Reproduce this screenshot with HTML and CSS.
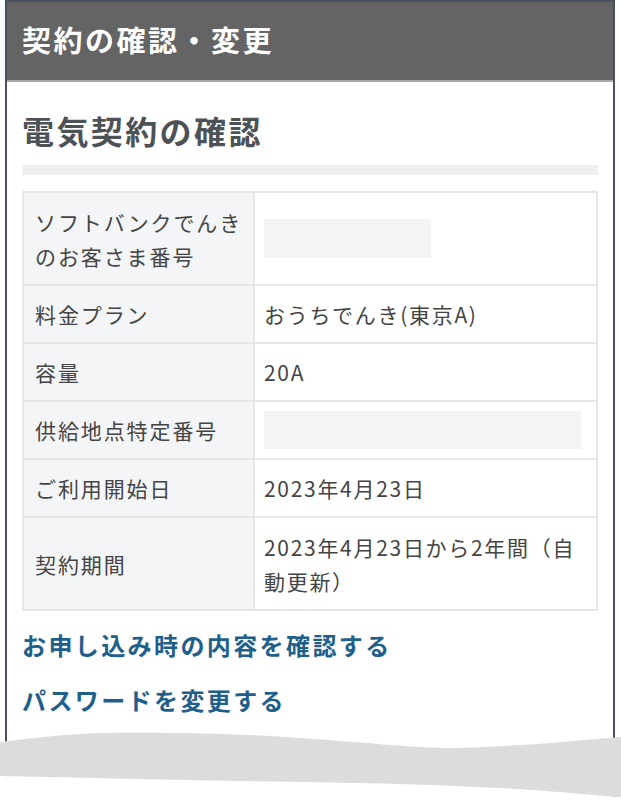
FILE: index.html
```html
<!DOCTYPE html>
<html lang="ja">
<head>
<meta charset="utf-8">
<link rel="stylesheet" href="styles.css">
</head>
<body>
<div class="page">
  <div class="phone">
    <header class="topbar"><h1 class="topbar-title">契約の確認・変更</h1></header>
    <main class="content">
      <h2 class="section-title">電気契約の確認</h2>
      <div class="section-rule"></div>
      <table class="info">
        <tr class="row-tall">
          <th>ソフトバンクでんき<br>のお客さま番号</th>
          <td><div class="mask mask-short"></div></td>
        </tr>
        <tr>
          <th>料金プラン</th>
          <td>おうちでんき(東京A)</td>
        </tr>
        <tr>
          <th>容量</th>
          <td>20A</td>
        </tr>
        <tr>
          <th>供給地点特定番号</th>
          <td><div class="mask mask-long"></div></td>
        </tr>
        <tr>
          <th>ご利用開始日</th>
          <td>2023年4月23日</td>
        </tr>
        <tr class="row-tall">
          <th>契約期間</th>
          <td>2023年4月23日から2年間（自<br>動更新）</td>
        </tr>
      </table>
      <a class="link" href="#">お申し込み時の内容を確認する</a>
      <a class="link" href="#">パスワードを変更する</a>
    </main>
  </div>
  <svg class="tear" width="621" height="82" viewBox="0 0 621 82" aria-hidden="true">
    <path d="M0 82 L0 56 C100 58 220 61 300 62 C380 63 440 65 500 68 C560 71 600 76 621 77 L621 82 Z" fill="#ffffff"/>
    <path d="M0 22 C40 17 70 14 100 13 C180 12 250 14 300 18 C370 23 420 28 450 28 C520 27 580 20 621 17 L621 77 C600 76 560 71 500 68 C440 65 380 63 300 62 C220 61 100 58 0 56 Z" fill="#dcdcdc"/>
  </svg>
</div>
</body>
</html>
```

FILE: styles.css
```css
html, body {
  margin: 0;
  padding: 0;
  background: #ffffff;
}
.page {
  position: relative;
  width: 621px;
  height: 802px;
  overflow: hidden;
  font-family: "Noto Sans CJK JP", "Noto Sans", sans-serif;
}
.phone {
  margin-left: 5px;
  width: 606px;
  height: 802px;
  border-left: 2px solid #48515c;
  border-right: 2px solid #48515c;
  border-top: 2px solid #48515c;
  background: #ffffff;
}
.topbar {
  height: 78px;
  background: #646464;
  border-bottom: 2px solid #a8a8a8;
  display: flex;
  align-items: center;
  padding-left: 15px;
}
.topbar-title {
  margin: 0 0 4px;
  color: #ffffff;
  font-size: 29px;
  font-weight: 700;
  letter-spacing: 2.5px;
}
.content {
  padding: 0 15px;
}
.section-title {
  margin: 25px 0 0;
  font-size: 32px;
  line-height: 46px;
  font-weight: 700;
  color: #4d5257;
  letter-spacing: 2.4px;
}
.section-rule {
  margin-top: 12px;
  height: 10px;
  background: #eeeeee;
}
.info {
  margin-top: 16px;
  width: 576px;
  border-collapse: collapse;
  font-size: 21px;
  color: #444444;
}
.info th, .info td {
  border: 2px solid #e6e6e6;
  height: 56px;
  padding: 0 0 0 11px;
  text-align: left;
  font-weight: 400;
  line-height: 34px;
  letter-spacing: 1.9px;
}
.info th {
  width: 218px;
  background: #f4f5f7;
}
.info td {
  background: #ffffff;
  padding-left: 9px;
  letter-spacing: 1.7px;
}
.info .row-tall th, .info .row-tall td {
  height: 91px;
}
.mask {
  height: 39px;
  background: #f3f4f6;
}
.mask-short { width: 167px; }
.mask-long { width: 317px; height: 38px; }
.link {
  display: block;
  color: #1f5f8c;
  font-size: 24px;
  font-weight: 700;
  text-decoration: none;
  letter-spacing: 2.4px;
  line-height: 30px;
}
.info + .link {
  margin-top: 19px;
}
.link + .link {
  margin-top: 25px;
}
.tear {
  position: absolute;
  left: 0;
  top: 720px;
}
```
